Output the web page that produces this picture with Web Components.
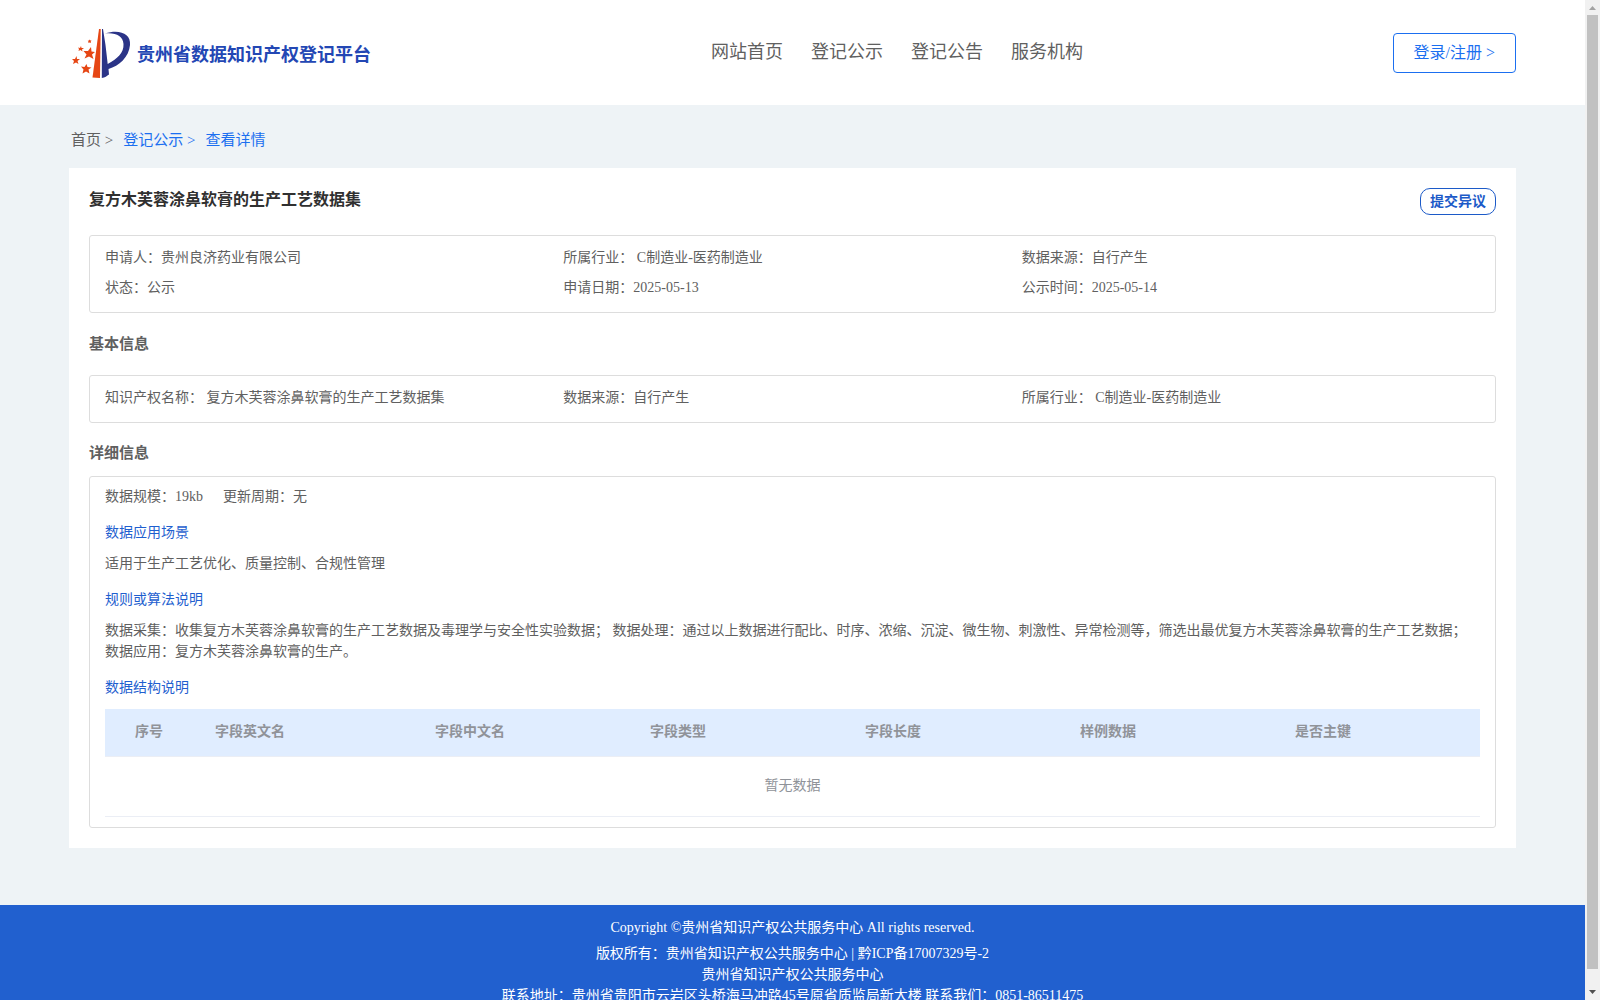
<!DOCTYPE html>
<html lang="zh-CN">
<head>
<meta charset="utf-8">
<title>贵州省数据知识产权登记平台</title>
<style>
html,body{margin:0;height:100%}
body{font-family:"Liberation Serif","Noto Sans CJK SC",serif;font-size:14px;line-height:21px;color:#606060;overflow:hidden}
</style>
</head>
<body>
<app-window>
  <site-header></site-header>
  <crumb-trail></crumb-trail>
  <detail-card></detail-card>
  <site-footer></site-footer>
</app-window>
<script>
const define = (name, html) => {
  const t = document.createElement('template');
  t.innerHTML = '<style>*{box-sizing:border-box}h1,h2,h3,p{margin:0}a{color:inherit;text-decoration:none}</style>' + html;
  customElements.define(name, class extends HTMLElement {
    constructor() {
      super();
      this.attachShadow({mode: 'open'}).append(t.content.cloneNode(true));
    }
  });
};

define('app-window', `<style>
:host{display:flex;height:100vh}
main{flex:1;min-width:0;overflow:hidden;background:#eef3f6}
</style><main><slot></slot></main><scroll-rail></scroll-rail>`);

define('scroll-rail', `<style>
:host{display:flex;flex-direction:column;width:15px;background:#f1f1f1;align-items:center}
svg{display:block;width:15px;height:15px}
i{flex:1;width:11px;background:#c1c1c1;margin-bottom:16px}
</style><svg viewBox="0 0 15 15"><path d="M4 10L7.500 6L11 10Z" fill="#a3a3a3"/></svg><i></i>
<svg viewBox="0 0 15 15"><path d="M4 5L7.500 9L11 5Z" fill="#505050"/></svg>`);

define('brand-logo', `<style>
:host{display:flex;align-items:center;gap:6px;padding-left:2px}
svg{width:59px;height:50px}
h1{font-size:18px;line-height:24px;padding-top:4px;color:#2347b4;font-weight:600}
</style><svg viewBox="0 0 59 50">
<path d="M27 1L20.500 49.500L28 50L28.700 1Z" fill="#e64614"/>
<path d="M30 1H31L33.500 17L35.700 36C45 31 52 25 51.500 16C51 8 44 4.500 33 5.500C48 1 59 6 58 17C57 29 47 38 36.500 41L37 46.500C35 48 33 49.500 29.800 50Z" fill="#2b3487"/>
<g fill="#e64614">
<path d="M19 19L19.500 23.500L23 24L20 26.500L21.500 31L17 28.500L12.500 30.500L14.500 26.500L11.500 23L16 23Z"/>
<path d="M14.500 36L15.500 39L19.500 39.500L16.500 41.500L17.500 45.500L14 43.500L10.500 45.500L11.500 41.500L9 38.500L12.500 39Z"/>
<path d="M4.500 28L5 31L8 31L5.500 33L6.500 36L4 34.500L1 36L2 33L0 31L3 31Z"/>
<path d="M9 18L9.500 20L12 20L10 21.500L10.500 23.500L8.500 22L6.500 23L7 21L6 19.500L8 20Z"/>
<path d="M17.700 11.500L18.400 12.500L19.500 12.500L18.700 13.700L19 15L17.700 14.500L16.300 15L16.500 13.700L15.700 12.700L17 12.500Z"/>
</g></svg><h1>贵州省数据知识产权登记平台</h1>`);

define('site-header', `<style>
:host{display:flex;justify-content:space-between;align-items:center;height:105px;padding:0 69px 0 70px;background:#fff}
brand-logo{flex:3}
.end{flex:2;display:flex;justify-content:flex-end}
nav{display:flex;gap:28px;font-size:18px;line-height:24px;padding:0 7px 2px 0}
button{height:40px;padding:0 20px;border:1px solid #1b6ff0;border-radius:4px;background:#fff;color:#1b6ff0;font-family:inherit;font-size:16px;line-height:24px}
</style><brand-logo></brand-logo>
<nav><a href="#">网站首页</a><a href="#">登记公示</a><a href="#">登记公告</a><a href="#">服务机构</a></nav>
<div class="end"><button>登录/注册 &gt;</button></div>`);

define('crumb-trail', `<style>
:host{display:block}
nav{display:flex;gap:10px;padding:26px 71px 18px;font-size:15px;line-height:19px}
.on{color:#1b6ff0}
</style><nav><a href="#">首页 &gt;</a><a class="on" href="#">登记公示 &gt;</a><a class="on" href="#">查看详情</a></nav>`);

define('info-grid', `<style>
:host{display:grid;grid-template-columns:repeat(3,1fr);border:1px solid #ddd;border-radius:3px;padding:7px 15px 9px;line-height:30px}
</style><slot></slot>`);

define('field-table', `<style>
:host{display:block}
table{width:100%;table-layout:fixed;border-collapse:separate;border-spacing:0;color:#909399}
th{height:48px;padding:0 10px 2px;text-align:left;background:#e0edff;border-bottom:1px solid #ebeef5}
th:first-child{padding-left:30px}
td{height:60px;padding:0 0 2px;text-align:center;border-bottom:1px solid #ebeef5}
</style><table>
<colgroup><col style="width:100px"><col style="width:220px"><col style="width:215px"><col style="width:215px"><col style="width:215px"><col style="width:215px"><col style="width:195px"></colgroup>
<thead><tr><th>序号</th><th>字段英文名</th><th>字段中文名</th><th>字段类型</th><th>字段长度</th><th>样例数据</th><th>是否主键</th></tr></thead>
<tbody><tr><td colspan="7">暂无数据</td></tr></tbody></table>`);

define('detail-card', `<style>
:host{display:block;margin:0 69px 57px;padding:20px;background:#fff}
header{display:flex;justify-content:space-between;align-items:flex-start;margin-bottom:20px}
h1{font-size:16px;line-height:24px;color:#303030}
button{height:27px;padding:0 9px;border:1px solid #1c5ac8;border-radius:10px;background:#fff;color:#1c5ac8;font-family:inherit;font-size:14px;line-height:21px;font-weight:700}
h2{font-size:15px;line-height:20px}
.basic{margin:21px 0}
.more{margin:20px 0 13px}
.box{border:1px solid #ddd;border-radius:3px;padding:9px 15px 10px}
.row{display:flex;gap:20px}
h3{font-size:14px;line-height:21px;font-weight:400;color:#1f5fcf;margin:15px 0 10px}
field-table{margin-top:11px}
</style>
<header><h1>复方木芙蓉涂鼻软膏的生产工艺数据集</h1><button>提交异议</button></header>
<info-grid>
<span>申请人：贵州良济药业有限公司</span><span>所属行业： C制造业-医药制造业</span><span>数据来源：自行产生</span>
<span>状态：公示</span><span>申请日期：2025-05-13</span><span>公示时间：2025-05-14</span>
</info-grid>
<h2 class="basic">基本信息</h2>
<info-grid>
<span>知识产权名称： 复方木芙蓉涂鼻软膏的生产工艺数据集</span><span>数据来源：自行产生</span><span>所属行业： C制造业-医药制造业</span>
</info-grid>
<h2 class="more">详细信息</h2>
<section class="box">
<div class="row"><span>数据规模：19kb</span><span>更新周期：无</span></div>
<h3>数据应用场景</h3>
<p>适用于生产工艺优化、质量控制、合规性管理</p>
<h3>规则或算法说明</h3>
<p>数据采集：收集复方木芙蓉涂鼻软膏的生产工艺数据及毒理学与安全性实验数据； 数据处理：通过以上数据进行配比、时序、浓缩、沉淀、微生物、刺激性、异常检测等，筛选出最优复方木芙蓉涂鼻软膏的生产工艺数据； 数据应用：复方木芙蓉涂鼻软膏的生产。</p>
<h3>数据结构说明</h3>
<field-table></field-table>
</section>`);

define('site-footer', `<style>
:host{display:block;padding:12px 0;background:#2160cf;color:#fff;text-align:center}
.first{margin-bottom:5px}
</style><p class="first">Copyright ©贵州省知识产权公共服务中心 All rights reserved.</p>
<p>版权所有：贵州省知识产权公共服务中心 | 黔ICP备17007329号-2</p>
<p>贵州省知识产权公共服务中心</p>
<p>联系地址：贵州省贵阳市云岩区头桥海马冲路45号原省质监局新大楼 联系我们：0851-86511475</p>`);
</script>
</body>
</html>
